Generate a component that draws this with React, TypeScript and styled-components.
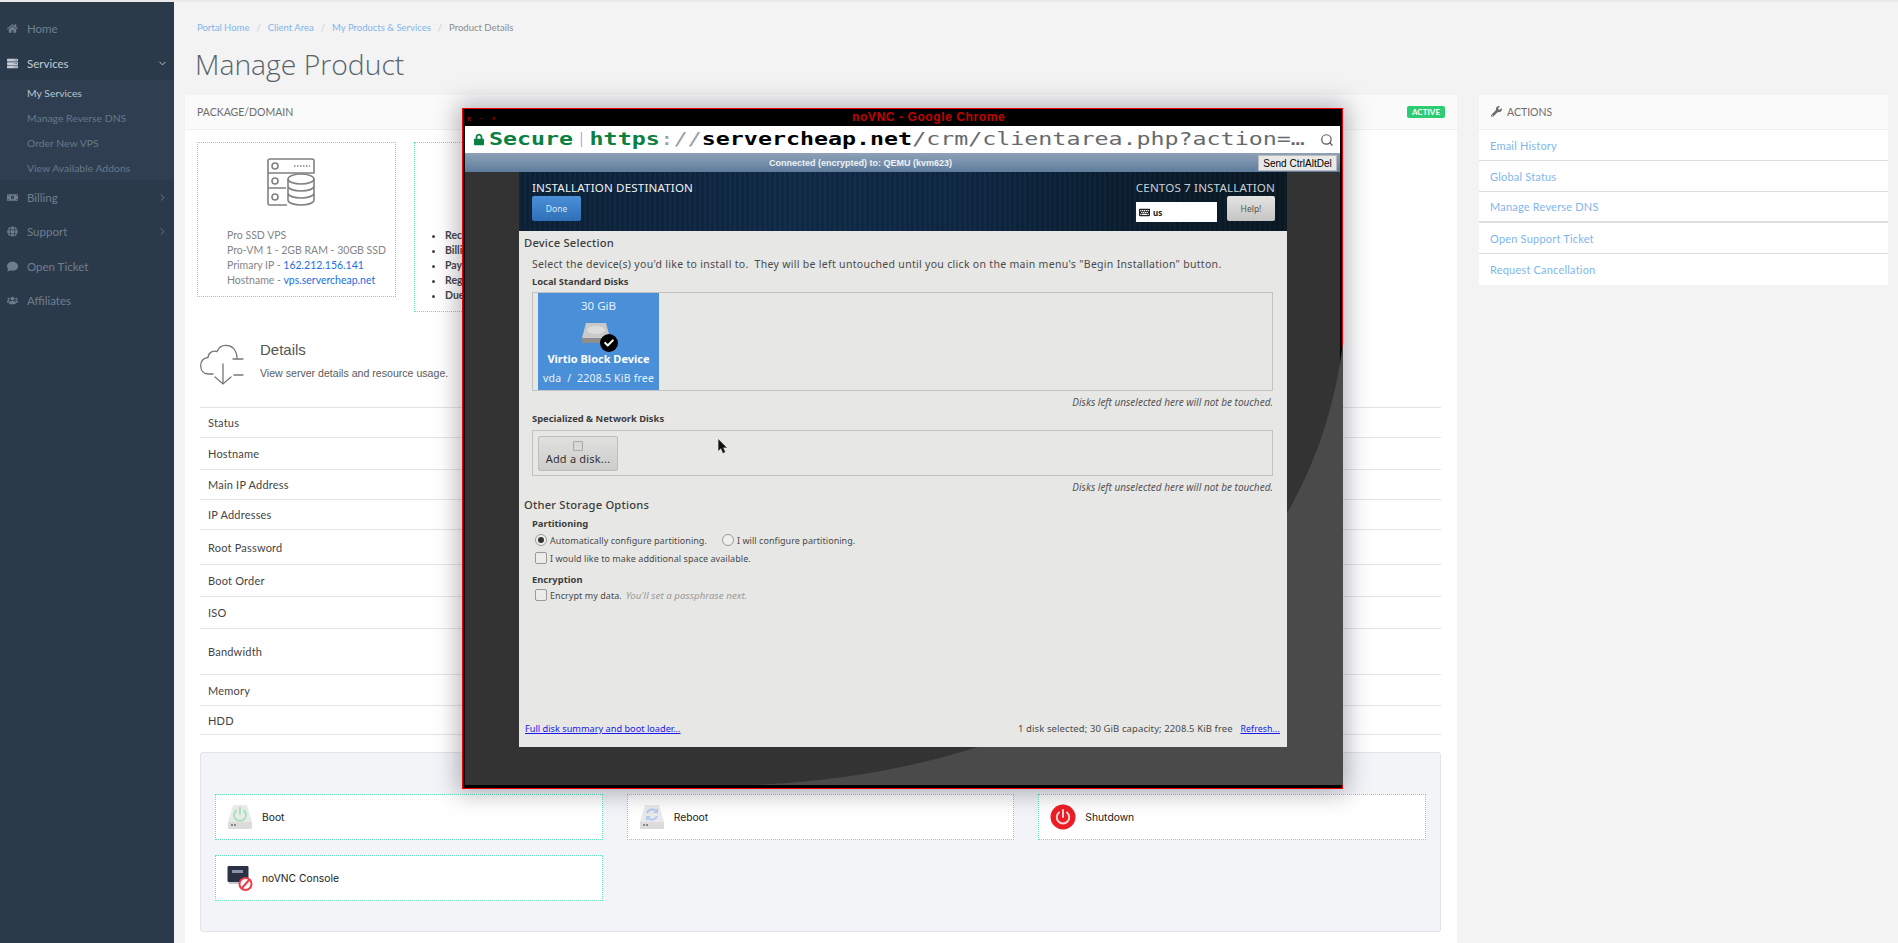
import styled, { createGlobalStyle } from "styled-components";
import {
  FaHome,
  FaServer,
  FaMoneyBillAlt,
  FaGlobe,
  FaComment,
  FaUsers,
  FaWrench,
  FaLock,
  FaCheck,
  FaKeyboard,
} from "react-icons/fa";
import { FiChevronDown, FiChevronRight, FiSearch } from "react-icons/fi";

const GlobalStyle = createGlobalStyle`
  html, body {
    margin: 0;
    padding: 0;
    background: #f3f3f3;
  }
  * {
    box-sizing: border-box;
  }
`;

const Page = styled.div`
  position: relative;
  display: flex;
  width: 1898px;
  height: 943px;
  overflow: hidden;
  border-top: 2px solid #e9e9e9;
  font-family: "Lato", "Liberation Sans", sans-serif;
`;

const Sidebar = styled.aside`
  flex: 0 0 174px;
  background: #2b3a4a;
  padding-top: 9px;
`;

const NavItem = styled.div<{ $active?: boolean }>`
  display: flex;
  align-items: center;
  height: 34.5px;
  padding: ${(p) => (p.$active ? "2px" : "0")} 6px 0 7px;
  font-size: 11.5px;
  color: ${(p) => (p.$active ? "#c3ccd5" : "#6e7e8e")};

  > svg:first-child {
    flex: 0 0 11px;
    width: 11px;
    height: 11px;
    margin-right: 9px;
  }
  > span {
    flex: 1;
  }
`;

const Chevron = styled.i`
  display: flex;
  font-style: normal;
  font-size: 11px;
`;

const SubMenu = styled.div`
  background: #2f3f51;
`;

const SubItem = styled.div<{ $active?: boolean }>`
  display: flex;
  align-items: center;
  height: 25px;
  padding-left: 27px;
  font-size: 10.4px;
  color: ${(p) => (p.$active ? "#b9c4cf" : "#66788a")};
`;

const Main = styled.main`
  flex: 1;
  padding-left: 11px;
  min-width: 0;
`;

const Breadcrumb = styled.nav`
  display: flex;
  align-items: center;
  height: 14px;
  margin: 18px 0 0 12px;
  font-size: 9.5px;
  color: #7fb6ec;
`;

const Crumb = styled.span<{ $current?: boolean }>`
  color: ${(p) => (p.$current ? "#8b8b8b" : "#7fb6ec")};
`;

const CrumbSep = styled.span`
  margin: 0 7px;
  color: #c9c9c9;
`;

const Title = styled.h1`
  margin: 9px 0 10px 10px;
  height: 42px;
  line-height: 42px;
  font-family: "Open Sans", "Liberation Sans", sans-serif;
  font-size: 28.3px;
  font-weight: 300;
  color: #59636d;
`;

const Columns = styled.div`
  display: grid;
  grid-template-columns: 1272px 409px;
  column-gap: 22px;
  align-items: start;
`;

const Panel = styled.section<{ $full?: boolean }>`
  background: #fff;
  min-height: ${(p) => (p.$full ? "848px" : "0")};
`;

const PanelHeader = styled.header`
  display: flex;
  align-items: center;
  justify-content: space-between;
  height: 35px;
  padding: 0 12px;
  background: #fafafa;
  border-bottom: 1px solid #f0f0f3;
  font-size: 10.5px;
  color: #6d6d6d;
  text-transform: uppercase;

  svg {
    width: 11px;
    height: 11px;
    margin-right: 5px;
    vertical-align: -1px;
  }
`;

const Badge = styled.span`
  padding: 0 5px;
  height: 12px;
  line-height: 12px;
  border-radius: 2px;
  background: #2ecc71;
  color: #fff;
  font-size: 8px;
  font-weight: 700;
`;

const PanelBody = styled.div`
  padding: 12px 16px 0 15px;
`;

const PackageRow = styled.div`
  display: flex;
  align-items: flex-start;
  gap: 18px;
  margin: 0 0 32px -3px;
`;

const DottedBox = styled.div<{ $w: number; $h: number }>`
  width: ${(p) => p.$w}px;
  height: ${(p) => p.$h}px;
  border: 1px dotted #5fe3b8;
  padding: 15px 0 0 29px;
  font-size: 10.5px;
  line-height: 15px;
  color: #858585;
`;

const ServerIcon = styled.svg`
  display: block;
  margin: 0 0 22px 40px;
`;

const Blue = styled.span`
  color: #1a6fe6;
`;

const BulletList = styled.ul`
  margin: 70px 0 0 1px;
  padding: 0;
  list-style: disc outside;
  color: #444;
  font-weight: 700;
`;

const DetailsHead = styled.div`
  display: flex;
  height: 63px;
`;

const CloudIcon = styled.svg`
  flex: 0 0 44px;
  margin-right: 16px;
`;

const DetailsTitle = styled.h3`
  margin: -1px 0 6px;
  font-family: "Liberation Sans", sans-serif;
  font-size: 15px;
  line-height: 14px;
  font-weight: 400;
  color: #555;
`;

const DetailsText = styled.p`
  margin: 10px 0 0;
  font-family: "Liberation Sans", sans-serif;
  font-size: 10.6px;
  color: #5a5a5a;
`;

const Table = styled.div`
  border-top: 1px solid #e3e4e6;
`;

const TableRow = styled.div<{ $h: number }>`
  display: flex;
  align-items: center;
  height: ${(p) => p.$h}px;
  padding-left: 8px;
  border-bottom: 1px solid #e3e4e6;
  font-size: 11px;
  letter-spacing: 0.2px;
  color: #444;
`;

const ActionsBox = styled.div`
  margin-top: 17px;
  height: 180px;
  padding: 41px 14px 0;
  background: #f2f4f8;
  border: 1px solid #e2e3e6;
  border-radius: 3px;
  display: grid;
  grid-template-columns: repeat(3, 1fr);
  grid-auto-rows: 46px;
  gap: 15px 24px;
`;

const ActionCard = styled.div`
  display: flex;
  align-items: center;
  gap: 9px;
  padding-left: 11px;
  background: #fff;
  border: 1px dotted #5fe3b8;
  font-family: "Inter", "Liberation Sans", sans-serif;
  font-size: 10.3px;
  color: #222;
`;

const ActionLink = styled.div<{ $thick?: boolean }>`
  display: flex;
  align-items: center;
  height: 31px;
  padding-left: 11px;
  border-bottom: ${(p) => (p.$thick ? "2px" : "1px")} solid #dedede;
  font-size: 11px;
  letter-spacing: 0.2px;
  color: #7fb6ec;

  &:last-child {
    border-bottom: none;
  }
`;

/* the floating noVNC browser window */
const VncWindow = styled.div`
  position: absolute;
  left: 462px;
  top: 106px;
  width: 881px;
  height: 681px;
  display: flex;
  flex-direction: column;
  border: 1px solid #f00000;
  box-shadow: 0 0 22px 4px rgba(40, 40, 60, 0.35);
  background: #000;
`;

const WindowFrame = styled.div`
  flex: 1;
  display: flex;
  flex-direction: column;
  margin: 0 2px 3px;
  min-height: 0;
`;

const TitleBar = styled.div`
  position: relative;
  flex: 0 0 17px;
  display: flex;
  align-items: center;
  padding-left: 2px;
  background: #000;
  color: #c40000;
  font-size: 8px;
  letter-spacing: 9px;
`;

const TitleText = styled.span`
  position: absolute;
  left: 387px;
  font-family: "Liberation Sans", sans-serif;
  font-size: 12px;
  font-weight: 700;
  letter-spacing: 0.6px;
  line-height: 17px;
`;

const AddressBar = styled.div`
  flex: 0 0 27px;
  display: flex;
  align-items: center;
  padding-left: 9px;
  background: #fff;
  overflow: hidden;
  color: #0b8043;

  > svg:first-child {
    flex: 0 0 10px;
    width: 10px;
    height: 13px;
    margin-right: 5px;
  }
`;

const AddressText = styled.div`
  flex: 0 0 600px;
  white-space: nowrap;
  font-family: "DejaVu Sans Mono", "Liberation Mono", monospace;
  font-size: 17px;
  line-height: 25px;
  transform: scaleX(1.37);
  transform-origin: left center;
`;

const UrlPart = styled.span<{ $tone: "green" | "grey" | "black" | "pale" }>`
  color: ${(p) =>
    ({ green: "#0b8043", grey: "#666a6e", black: "#000", pale: "#9aa0a6" })[p.$tone]};
  font-weight: ${(p) => (p.$tone === "green" || p.$tone === "black" ? 700 : 400)};
`;

const UrlDivider = styled.i`
  display: inline-block;
  width: 1px;
  height: 15px;
  margin: 0 5px 0 6px;
  vertical-align: -2px;
  background: #bbb;
`;

const ZoomGlyph = styled.div`
  margin-left: auto;
  margin-right: 6px;
  display: flex;
  color: #555;
  font-size: 14px;
`;

const StatusBar = styled.div`
  flex: 0 0 19px;
  display: flex;
  align-items: center;
  justify-content: space-between;
  padding: 0 3px 0 304px;
  background: linear-gradient(#8ea2b8, #5f7c9c);
  font-family: "Liberation Sans", sans-serif;
  font-size: 9px;
  font-weight: 700;
  color: #eef2f6;
`;

const SendButton = styled.div`
  width: 79px;
  height: 16px;
  line-height: 15px;
  text-align: center;
  background: #e8e8e8;
  border: 1px solid #bbb;
  font-size: 10px;
  font-weight: 400;
  color: #000;
`;

const Desktop = styled.div`
  position: relative;
  flex: 1;
  min-height: 0;
  padding: 0 53px 38px 54px;
  background: #333;
`;

const Wave = styled.svg`
  position: absolute;
  left: 0;
  top: 0;
`;

const Installer = styled.div`
  position: relative;
  display: flex;
  flex-direction: column;
  height: 100%;
  background: #e7e7e5;
  font-family: "Noto Sans", "Open Sans", sans-serif;
  color: #4a4a4a;
`;

const InstallerHeader = styled.div`
  flex: 0 0 59px;
  display: flex;
  justify-content: space-between;
  padding: 8px 12px 0 13px;
  background:
    repeating-linear-gradient(90deg, rgba(255, 255, 255, 0.018) 0 2px, rgba(0, 0, 0, 0.05) 2px 5px),
    linear-gradient(90deg, #0c2238 0%, #102a48 35%, #0e2743 60%, #0a1c2b 85%, #091823 100%);
`;

const HeaderColumn = styled.div<{ $right?: boolean }>`
  display: flex;
  flex-direction: column;
  align-items: ${(p) => (p.$right ? "flex-end" : "flex-start")};
`;

const HeaderTitle = styled.div<{ $dim?: boolean }>`
  height: 16px;
  line-height: 15px;
  font-size: 11.6px;
  letter-spacing: 0.15px;
  color: ${(p) => (p.$dim ? "#c9d2da" : "#eef2f6")};
`;

const DoneButton = styled.div`
  width: 49px;
  height: 25px;
  line-height: 25px;
  text-align: center;
  border-radius: 2px;
  background: linear-gradient(#4a90d9, #2f6fb8);
  font-size: 8.5px;
  color: #dce8f4;
`;

const HeaderControls = styled.div`
  display: flex;
  align-items: flex-start;
  gap: 10px;
`;

const KeyboardBox = styled.div`
  width: 81px;
  height: 20px;
  margin-top: 6px;
  display: flex;
  align-items: center;
  gap: 3px;
  padding-left: 3px;
  background: #fff;
  font-size: 8px;
  font-weight: 700;
  color: #222;

  svg {
    width: 11px;
    height: 11px;
  }
`;

const HelpButton = styled.div`
  width: 48px;
  height: 25px;
  line-height: 25px;
  text-align: center;
  border-radius: 2px;
  background: linear-gradient(#e4e4e2, #c4c4c2);
  font-size: 8.5px;
  color: #555;
`;

const InstallerBody = styled.div`
  flex: 1;
  display: flex;
  flex-direction: column;
  padding: 0 7px 11px 5px;
`;

const SectionTitle = styled.div<{ $top: number }>`
  margin-top: ${(p) => p.$top}px;
  height: 14px;
  line-height: 14px;
  font-size: 11.2px;
  font-weight: 500;
  letter-spacing: 0.2px;
  color: #3c3c3c;
`;

const Hint = styled.div`
  margin: 7px 0 0 8px;
  height: 14px;
  line-height: 14px;
  font-size: 10.5px;
  letter-spacing: 0.3px;
  white-space: pre;
`;

const GroupLabel = styled.div<{ $top: number }>`
  margin: ${(p) => p.$top}px 0 0 8px;
  height: 14px;
  line-height: 14px;
  font-size: 9.4px;
  font-weight: 700;
  color: #3c3c3c;
`;

const DiskArea = styled.div<{ $h: number; $top: number }>`
  position: relative;
  display: flex;
  align-items: center;
  height: ${(p) => p.$h}px;
  margin: ${(p) => p.$top}px 7px 0 8px;
  padding-left: 5px;
  border: 1px solid #c2c2c0;
`;

const DiskTile = styled.div`
  width: 121px;
  height: 97px;
  display: flex;
  flex-direction: column;
  align-items: center;
  padding-top: 6px;
  background: #4a90d9;
  color: #e8f1fa;
  font-size: 11.5px;
  line-height: 14px;
`;

const DiskIconWrap = styled.div`
  position: relative;
  width: 36px;
  height: 30px;
  margin-top: 9px;
`;

const CheckBadge = styled.div`
  position: absolute;
  right: -1px;
  bottom: 0;
  width: 18px;
  height: 18px;
  display: flex;
  align-items: center;
  justify-content: center;
  border-radius: 50%;
  background: #000;
  color: #fff;
  font-size: 10px;
`;

const DiskName = styled.div`
  font-size: 11px;
  font-weight: 700;
  color: #fff;
`;

const DiskFree = styled.div`
  margin-top: 5px;
  font-size: 10.5px;
  letter-spacing: 0.2px;
  white-space: pre;
`;

const AddDisk = styled.div`
  width: 80px;
  height: 35px;
  display: flex;
  flex-direction: column;
  align-items: center;
  padding-top: 4px;
  background: linear-gradient(#e0e0de, #cdcdcb);
  border: 1px solid #bdbdbb;
  border-radius: 2px;
  font-size: 11px;
  line-height: 13px;
  letter-spacing: 0.2px;
  color: #333;
`;

const DiskGlyph = styled.i`
  display: block;
  width: 10px;
  height: 10px;
  margin-bottom: 1px;
  background: #d8d8d6;
  border: 1px solid #a9a9a7;
  border-radius: 1px;
`;

const Pointer = styled.svg`
  position: absolute;
  left: 185px;
  top: 8px;
`;

const Note = styled.div`
  margin: 5px 7px 0 0;
  height: 12px;
  line-height: 12px;
  text-align: right;
  font-size: 10px;
  font-style: italic;
  color: #555;
`;

const OptionRow = styled.div<{ $top: number }>`
  display: flex;
  align-items: center;
  margin: ${(p) => p.$top}px 0 0 11px;
  height: 14px;
  font-size: 9px;
  letter-spacing: 0.05px;
`;

const Radio = styled.i<{ $on?: boolean; $left?: number }>`
  display: flex;
  align-items: center;
  justify-content: center;
  width: 12px;
  height: 12px;
  margin: 0 3px 0 ${(p) => p.$left ?? 0}px;
  border: 1px solid #9a9a98;
  border-radius: 50%;
  background: #efefed;

  &::after {
    content: "";
    display: ${(p) => (p.$on ? "block" : "none")};
    width: 6px;
    height: 6px;
    border-radius: 50%;
    background: #333;
  }
`;

const Check = styled.i`
  display: block;
  width: 12px;
  height: 12px;
  margin-right: 3px;
  border: 1px solid #9a9a98;
  border-radius: 2px;
  background: #ececea;
`;

const Muted = styled.em`
  margin-left: 4px;
  font-size: 9.7px;
  color: #9a9a98;
`;

const Footer = styled.div`
  margin-top: auto;
  display: flex;
  justify-content: space-between;
  height: 14px;
  padding-left: 1px;
  line-height: 14px;
  font-size: 9.2px;
`;

const FooterLink = styled.span`
  color: #1a1aee;
  text-decoration: underline;
`;

const FooterInfo = styled.span`
  font-size: 9.5px;
  letter-spacing: 0.1px;
`;

const RefreshLink = styled(FooterLink)`
  font-size: 8.8px;
`;

function DriveIcon({ tone }: { tone: "boot" | "reboot" }) {
  return (
    <svg width="26" height="26" viewBox="0 0 26 26">
      <path d="M6 1h14l5 17H1z" fill="#eaeaea" />
      <rect x="1" y="18" width="24" height="7" fill="#dcdcdc" />
      <rect x="4" y="20" width="2" height="2" fill="#888" />
      <rect x="7" y="20" width="2" height="2" fill="#888" />
      {tone === "boot" ? (
        <>
          <path d="M9 6.5a6 6 0 1 0 8 0" fill="none" stroke="#9fe0b8" strokeWidth="1.8" strokeLinecap="round" />
          <path d="M13 4v6" stroke="#9fe0b8" strokeWidth="1.8" strokeLinecap="round" />
        </>
      ) : (
        <>
          <path d="M8 9a5.5 5.5 0 0 1 9.5-1.5" fill="none" stroke="#b4c8f0" strokeWidth="2" />
          <path d="M18 12a5.5 5.5 0 0 1-9.5 1.5" fill="none" stroke="#b4c8f0" strokeWidth="2" />
          <path d="M19 4v5h-5zM7 17v-5h5z" fill="#b4c8f0" />
        </>
      )}
    </svg>
  );
}

function ShutdownIcon() {
  return (
    <svg width="26" height="26" viewBox="0 0 26 26">
      <circle cx="13" cy="13" r="12.5" fill="#ee1c25" />
      <path d="M9 8.5a6.2 6.2 0 1 0 8 0" fill="none" stroke="#fbd5d5" strokeWidth="2" strokeLinecap="round" />
      <path d="M13 6v7" stroke="#fbd5d5" strokeWidth="2" strokeLinecap="round" />
    </svg>
  );
}

function VncIcon() {
  return (
    <svg width="26" height="26" viewBox="0 0 26 26">
      <rect x="0.5" y="1" width="21" height="16" rx="1" fill="#2b3246" />
      <rect x="2" y="17" width="18" height="2" fill="#c9c9d0" />
      <rect x="5" y="5" width="11" height="3" fill="#8b92a5" />
      <circle cx="18.5" cy="19" r="6" fill="#fff" stroke="#ef3b4a" strokeWidth="2" />
      <path d="M15 23l7-8" stroke="#ef3b4a" strokeWidth="2" />
    </svg>
  );
}

export default function App() {
  const details = [
    { label: "Status", h: 30 },
    { label: "Hostname", h: 32 },
    { label: "Main IP Address", h: 30 },
    { label: "IP Addresses", h: 30 },
    { label: "Root Password", h: 35 },
    { label: "Boot Order", h: 32 },
    { label: "ISO", h: 32 },
    { label: "Bandwidth", h: 46 },
    { label: "Memory", h: 31 },
    { label: "HDD", h: 29 },
  ];
  const actions = ["Email History", "Global Status", "Manage Reverse DNS", "Open Support Ticket", "Request Cancellation"];

  return (
    <Page>
      <GlobalStyle />
      <Sidebar>
        <NavItem>
          <FaHome />
          <span>Home</span>
        </NavItem>
        <NavItem $active>
          <FaServer />
          <span>Services</span>
          <Chevron>
            <FiChevronDown />
          </Chevron>
        </NavItem>
        <SubMenu>
          <SubItem $active>My Services</SubItem>
          <SubItem>Manage Reverse DNS</SubItem>
          <SubItem>Order New VPS</SubItem>
          <SubItem>View Available Addons</SubItem>
        </SubMenu>
        <NavItem>
          <FaMoneyBillAlt />
          <span>Billing</span>
          <Chevron>
            <FiChevronRight />
          </Chevron>
        </NavItem>
        <NavItem>
          <FaGlobe />
          <span>Support</span>
          <Chevron>
            <FiChevronRight />
          </Chevron>
        </NavItem>
        <NavItem>
          <FaComment />
          <span>Open Ticket</span>
        </NavItem>
        <NavItem>
          <FaUsers />
          <span>Affiliates</span>
        </NavItem>
      </Sidebar>

      <Main>
        <Breadcrumb>
          <Crumb>Portal Home</Crumb>
          <CrumbSep>/</CrumbSep>
          <Crumb>Client Area</Crumb>
          <CrumbSep>/</CrumbSep>
          <Crumb>My Products &amp; Services</Crumb>
          <CrumbSep>/</CrumbSep>
          <Crumb $current>Product Details</Crumb>
        </Breadcrumb>
        <Title>Manage Product</Title>
        <Columns>
          <Panel $full>
            <PanelHeader>
              PACKAGE/DOMAIN
              <Badge>ACTIVE</Badge>
            </PanelHeader>
            <PanelBody>
              <PackageRow>
                <DottedBox $w={199} $h={155}>
                  <ServerIcon width="48" height="48" viewBox="0 0 48 48" fill="none" stroke="#808080" strokeWidth="1.6">
                    <path d="M3 1h42a2 2 0 0 1 2 2v12H1V3a2 2 0 0 1 2-2z" />
                    <path d="M1 15v15h18M1 30v15a2 2 0 0 0 2 2h17" />
                    <circle cx="8" cy="8" r="3" />
                    <circle cx="8" cy="23" r="3" />
                    <circle cx="8" cy="39" r="3" />
                    <path d="M27 8h16" strokeDasharray="1.5 1.5" />
                    <ellipse cx="34" cy="21" rx="13" ry="5" fill="#fff" />
                    <path d="M21 21v21c0 3 6 5 13 5s13-2 13-5V21M21 28c0 3 6 5 13 5s13-2 13-5M21 35c0 3 6 5 13 5s13-2 13-5" />
                  </ServerIcon>
                  <div>Pro SSD VPS</div>
                  <div>Pro-VM 1 - 2GB RAM - 30GB SSD</div>
                  <div>
                    Primary IP - <Blue>162.212.156.141</Blue>
                  </div>
                  <div>
                    Hostname - <Blue>vps.servercheap.net</Blue>
                  </div>
                </DottedBox>
                <DottedBox $w={300} $h={170}>
                  <BulletList>
                    <li>Recurring Amount</li>
                    <li>Billing Cycle</li>
                    <li>Payment Method</li>
                    <li>Registration Date</li>
                    <li>Due Date</li>
                  </BulletList>
                </DottedBox>
              </PackageRow>
              <DetailsHead>
                <CloudIcon width="44" height="42" viewBox="0 0 44 42" fill="none" stroke="#777" strokeWidth="1.3" strokeLinecap="round">
                  <path d="M13 30H8C3 30 0.7 26 0.7 21.500C0.7 17 4 13.500 8 13.500C8.500 8 13 6.500 17 7.500C19 3 23 1 27 1.500C34 2 37 8 37 14.500" />
                  <path d="M33 15h10" />
                  <path d="M34 31h9" />
                  <path d="M23 20v20M15 33l8 7 8-7" />
                </CloudIcon>
                <div>
                  <DetailsTitle>Details</DetailsTitle>
                  <DetailsText>View server details and resource usage.</DetailsText>
                </div>
              </DetailsHead>
              <Table>
                {details.map((row) => (
                  <TableRow key={row.label} $h={row.h}>
                    {row.label}
                  </TableRow>
                ))}
              </Table>
              <ActionsBox>
                <ActionCard>
                  <DriveIcon tone="boot" />
                  Boot
                </ActionCard>
                <ActionCard>
                  <DriveIcon tone="reboot" />
                  Reboot
                </ActionCard>
                <ActionCard>
                  <ShutdownIcon />
                  Shutdown
                </ActionCard>
                <ActionCard>
                  <VncIcon />
                  noVNC Console
                </ActionCard>
              </ActionsBox>
            </PanelBody>
          </Panel>

          <Panel>
            <PanelHeader>
              <span>
                <FaWrench />
                Actions
              </span>
            </PanelHeader>
            {actions.map((a, i) => (
              <ActionLink key={a} $thick={i === 2}>
                {a}
              </ActionLink>
            ))}
          </Panel>
        </Columns>
      </Main>

      <VncWindow>
        <WindowFrame>
          <TitleBar>
            x-▫
            <TitleText>noVNC - Google Chrome</TitleText>
          </TitleBar>
          <AddressBar>
            <FaLock />
            <AddressText>
              <UrlPart $tone="green">Secure</UrlPart>
              <UrlDivider />
              <UrlPart $tone="green">https</UrlPart>
              <UrlPart $tone="pale">://</UrlPart>
              <UrlPart $tone="black">servercheap.net</UrlPart>
              <UrlPart $tone="grey">/crm/clientarea.php?action=…</UrlPart>
            </AddressText>
            <ZoomGlyph>
              <FiSearch />
            </ZoomGlyph>
          </AddressBar>
          <StatusBar>
            Connected (encrypted) to: QEMU (kvm623)
            <SendButton>Send CtrlAltDel</SendButton>
          </StatusBar>
          <Desktop>
            <Wave width="878" height="618" viewBox="0 0 878 618">
              <path d="M286 613C620 600 848 425 878 170V613Z" fill="#4a4a4a" />
            </Wave>
            <Installer>
              <InstallerHeader>
                <HeaderColumn>
                  <HeaderTitle>INSTALLATION DESTINATION</HeaderTitle>
                  <DoneButton>Done</DoneButton>
                </HeaderColumn>
                <HeaderColumn $right>
                  <HeaderTitle $dim>CENTOS 7 INSTALLATION</HeaderTitle>
                  <HeaderControls>
                    <KeyboardBox>
                      <FaKeyboard />
                      us
                    </KeyboardBox>
                    <HelpButton>Help!</HelpButton>
                  </HeaderControls>
                </HeaderColumn>
              </InstallerHeader>
              <InstallerBody>
                <SectionTitle $top={5}>Device Selection</SectionTitle>
                <Hint>{"Select the device(s) you'd like to install to.  They will be left untouched until you click on the main menu's \"Begin Installation\" button."}</Hint>
                <GroupLabel $top={4}>Local Standard Disks</GroupLabel>
                <DiskArea $h={99} $top={3}>
                  <DiskTile>
                    30 GiB
                    <DiskIconWrap>
                      <svg width="30" height="22" viewBox="0 0 30 22">
                        <path d="M5 1h20l4 15H1z" fill="#c9c9c9" />
                        <rect x="1" y="16" width="28" height="5" fill="#8f8f8f" />
                        <ellipse cx="15" cy="8" rx="9" ry="4" fill="#dcdcdc" />
                      </svg>
                      <CheckBadge>
                        <FaCheck />
                      </CheckBadge>
                    </DiskIconWrap>
                    <DiskName>Virtio Block Device</DiskName>
                    <DiskFree>{"vda  /  2208.5 KiB free"}</DiskFree>
                  </DiskTile>
                </DiskArea>
                <Note>Disks left unselected here will not be touched.</Note>
                <GroupLabel $top={4}>Specialized &amp; Network Disks</GroupLabel>
                <DiskArea $h={46} $top={4}>
                  <AddDisk>
                    <DiskGlyph />
                    Add a disk...
                  </AddDisk>
                  <Pointer width="10" height="15" viewBox="0 0 10 15">
                    <path d="M0.500 0.500V11.500L3 9.200L5 14L7 13L5 8.500H8.500Z" fill="#111" stroke="#444" strokeWidth="0.5" />
                  </Pointer>
                </DiskArea>
                <Note>Disks left unselected here will not be touched.</Note>
                <SectionTitle $top={5}>Other Storage Options</SectionTitle>
                <GroupLabel $top={5}>Partitioning</GroupLabel>
                <OptionRow $top={2}>
                  <Radio $on />
                  Automatically configure partitioning.
                  <Radio $left={15} />
                  I will configure partitioning.
                </OptionRow>
                <OptionRow $top={4}>
                  <Check />I would like to make additional space available.
                </OptionRow>
                <GroupLabel $top={8}>Encryption</GroupLabel>
                <OptionRow $top={1}>
                  <Check />
                  Encrypt my data. <Muted>You'll set a passphrase next.</Muted>
                </OptionRow>
                <Footer>
                  <FooterLink>Full disk summary and boot loader...</FooterLink>
                  <FooterInfo>
                    1 disk selected; 30 GiB capacity; 2208.5 KiB free&nbsp;&nbsp;&nbsp;<RefreshLink>Refresh...</RefreshLink>
                  </FooterInfo>
                </Footer>
              </InstallerBody>
            </Installer>
          </Desktop>
        </WindowFrame>
      </VncWindow>
    </Page>
  );
}
